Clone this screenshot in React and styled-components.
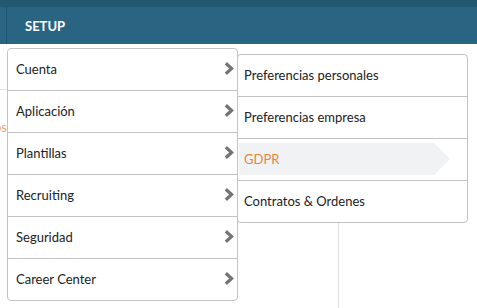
import React from 'react';
import styled, { createGlobalStyle } from 'styled-components';

const GlobalStyle = createGlobalStyle`
  body {
    margin: 0;
    font-family: Lato, 'Liberation Sans', sans-serif;
    background: #ffffff;
  }
`;

const Page = styled.div`
  position: relative;
  width: 477px;
  height: 308px;
  overflow: hidden;
  background: #ffffff;
`;

const TopStrip = styled.div`
  height: 7px;
  background: #225872;
`;

const Header = styled.header`
  height: 37px;
  display: flex;
  background: #296582;
`;

const HeaderEdge = styled.div`
  width: 6px;
  border-right: 1px solid #1f5570;
`;

const HeaderTab = styled.div`
  display: flex;
  align-items: center;
  padding-left: 18px;
  color: #ffffff;
  font-size: 13px;
  font-weight: 700;
`;

const Content = styled.div`
  display: flex;
  height: 264px;
`;

const SideCol = styled.div`
  width: 7px;
  overflow: hidden;
  display: flex;
  flex-direction: column;
`;

const SideSpacer = styled.div`
  height: 45px;
  flex-shrink: 0;
  border-bottom: 1px solid #e2e2e2;
`;

// partly hidden page link behind the flyout
const SideLink = styled.div`
  display: flex;
  justify-content: flex-end;
  padding-top: 29px;
  color: #f4a46c;
  font-size: 13px;
  line-height: 16px;
  white-space: nowrap;
`;

const MainCol = styled.div`
  width: 331px;
  margin-top: 20px;
  border-right: 1px solid #e0e0e0;
`;

const Flyout = styled.nav`
  position: absolute;
  top: 48px;
  left: 7px;
  display: flex;
  align-items: flex-start;
`;

const Menu = styled.ul`
  list-style: none;
  margin: ${(p) => (p.sub ? '6px 0 0 -1px' : '0')};
  padding: 0;
  width: 229px;
  background: #ffffff;
  border: 1px solid #c3c3c3;
  border-radius: 4px;
`;

const Row = styled.li`
  height: 42px;
  box-sizing: border-box;
  display: flex;
  align-items: center;
  justify-content: space-between;
  padding: ${(p) => (p.sub ? '0 0 2px 6px' : '0 3px 2px 8px')};
  border-top: 1px solid #c3c3c3;
  font-size: 13px;
  color: #222222;

  &:first-child {
    border-top: none;
    height: 41px;
  }
`;

const ActiveRow = styled.li`
  height: 42px;
  display: flex;
  border-top: 1px solid #c3c3c3;
  padding: 4px 17px 5px 1px;
  box-sizing: border-box;
`;

const Highlight = styled.div`
  flex: 1;
  display: flex;
  align-items: center;
  padding: 0 0 1px 5px;
  background: #f1f2f4;
  color: #e8853b;
  font-size: 13px;
  clip-path: polygon(0 0, calc(100% - 16px) 0, 100% 50%, calc(100% - 16px) 100%, 0 100%);
`;

const Chevron = () => (
  <svg width="10" height="13" viewBox="0 0 10 13">
    <path d="M1.8 1.2 L7.6 6.5 L1.8 11.8" fill="none" stroke="#747474" strokeWidth="3.2" />
  </svg>
);

const mainItems = ['Cuenta', 'Aplicación', 'Plantillas', 'Recruiting', 'Seguridad', 'Career Center'];
const subItems = ['Preferencias personales', 'Preferencias empresa', 'GDPR', 'Contratos & Ordenes'];
const activeSub = 'GDPR';

export default function App() {
  return (
    <>
      <GlobalStyle />
      <Page>
        <TopStrip />
        <Header>
          <HeaderEdge />
          <HeaderTab>SETUP</HeaderTab>
        </Header>
        <Content>
          <SideCol>
            <SideSpacer />
            <SideLink>Campos</SideLink>
          </SideCol>
          <MainCol />
        </Content>
        <Flyout>
          <Menu>
            {mainItems.map((label) => (
              <Row key={label}>
                <span>{label}</span>
                <Chevron />
              </Row>
            ))}
          </Menu>
          <Menu sub>
            {subItems.map((label) =>
              label === activeSub ? (
                <ActiveRow key={label}>
                  <Highlight>{label}</Highlight>
                </ActiveRow>
              ) : (
                <Row sub key={label}>
                  <span>{label}</span>
                </Row>
              )
            )}
          </Menu>
        </Flyout>
      </Page>
    </>
  );
}
